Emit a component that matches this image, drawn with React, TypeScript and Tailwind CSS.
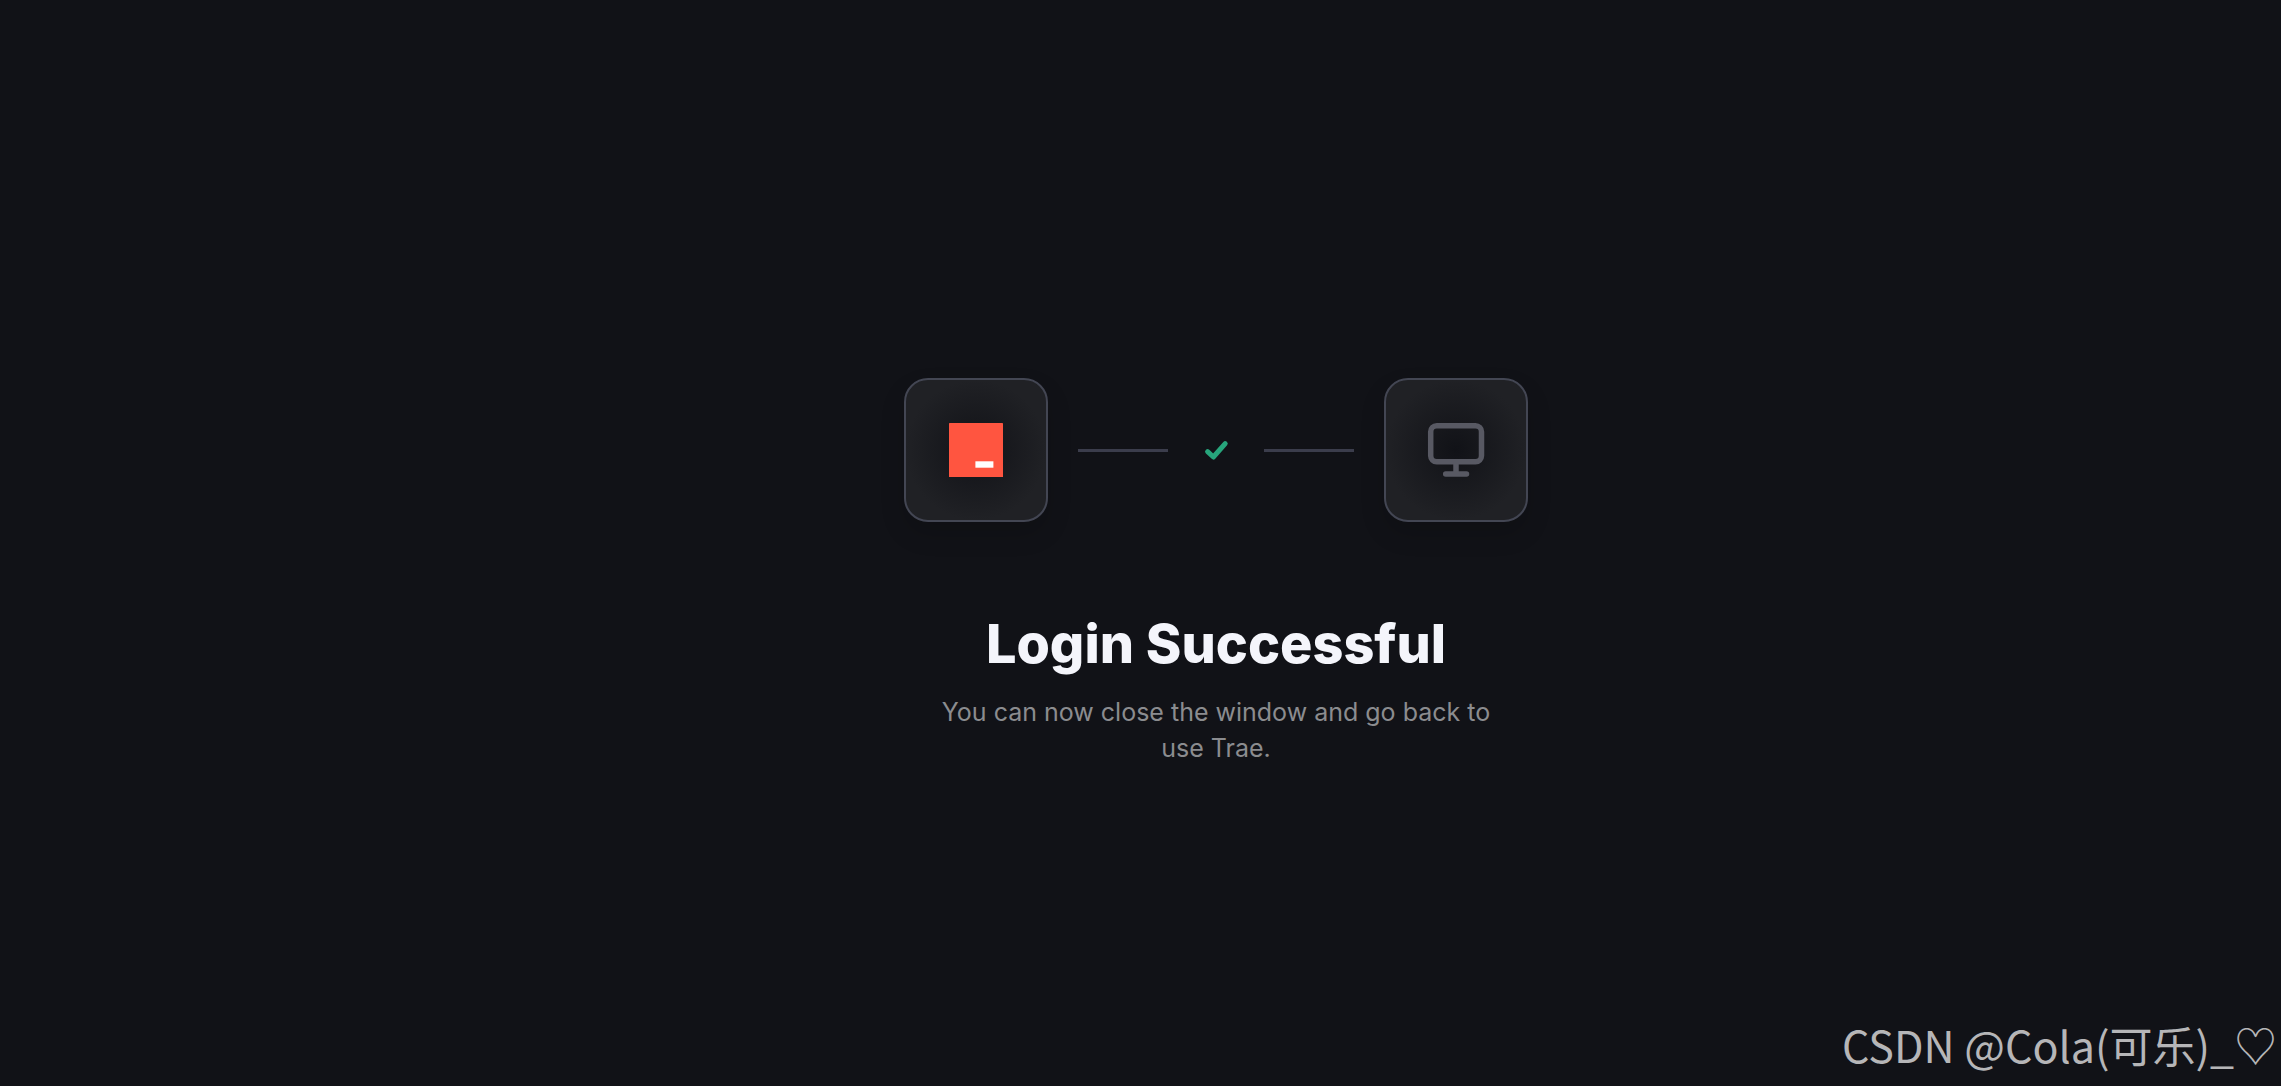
import { ReactNode } from "react";

const IconCard = ({ children }: { children: ReactNode }) => (
    <div className="flex h-36 w-36 shrink-0 items-center justify-center rounded-3xl border-2 border-[#434653] bg-[radial-gradient(circle_closest-side,#111217,#202125)] shadow-[0_12px_24px_rgba(0,0,0,0.15)]">
        {children}
    </div>
);

const Connector = () => <div className="h-[3px] w-[90px] bg-[#3b3d4c]" />;

export default function LoginSuccess() {
    return (
        <main className="relative flex min-h-screen flex-col items-center justify-center bg-[#111217] pt-[58px] pl-[151px]">
            <div className="flex items-center gap-[30px]">
                <IconCard>
                    <svg className="h-[54px] w-[54px]" viewBox="0 0 54 54" role="img" aria-label="Trae">
                        <rect width="54" height="54" rx="0.6" fill="#ff5540" />
                        <rect x="26.4" y="38.3" width="18" height="6.4" fill="#fff" />
                    </svg>
                </IconCard>
                <div className="flex items-center gap-6">
                    <Connector />
                    <svg className="h-12 w-12" viewBox="0 0 48 48" fill="none" role="img" aria-label="Success">
                        <path d="M15.6 25.7L21.4 31L33.2 17.6" stroke="#27a57c" strokeWidth="5" strokeLinecap="round" strokeLinejoin="round" />
                    </svg>
                    <Connector />
                </div>
                <IconCard>
                    <svg className="h-[60px] w-[60px]" viewBox="0 0 60 60" fill="none" stroke="#585963" strokeLinecap="round" role="img" aria-label="Desktop">
                        <rect x="4.7" y="5.8" width="50.8" height="36" rx="6" strokeWidth="5.5" />
                        <path d="M30 42v10" strokeWidth="5.5" strokeLinecap="butt" />
                        <path d="M19.7 54h20.8" strokeWidth="5.5" />
                    </svg>
                </IconCard>
            </div>
            <h1 className="mt-[86px] text-center font-['Inter',sans-serif] text-[54px] leading-[72px] font-extrabold text-[#f4f5fb]">
                Login Successful
            </h1>
            <p className="mt-3.5 w-[580px] text-center font-['Inter',sans-serif] text-[25px] leading-9 text-[#8b8c8f]">
                You can now close the window and go back to use Trae.
            </p>
            <p className="absolute right-1 bottom-3 font-['Noto_Sans_CJK_SC',sans-serif] text-[43px] leading-[60px] text-[#b6b6b8]">
                CSDN @Cola(可乐)_♡
            </p>
        </main>
    );
}
